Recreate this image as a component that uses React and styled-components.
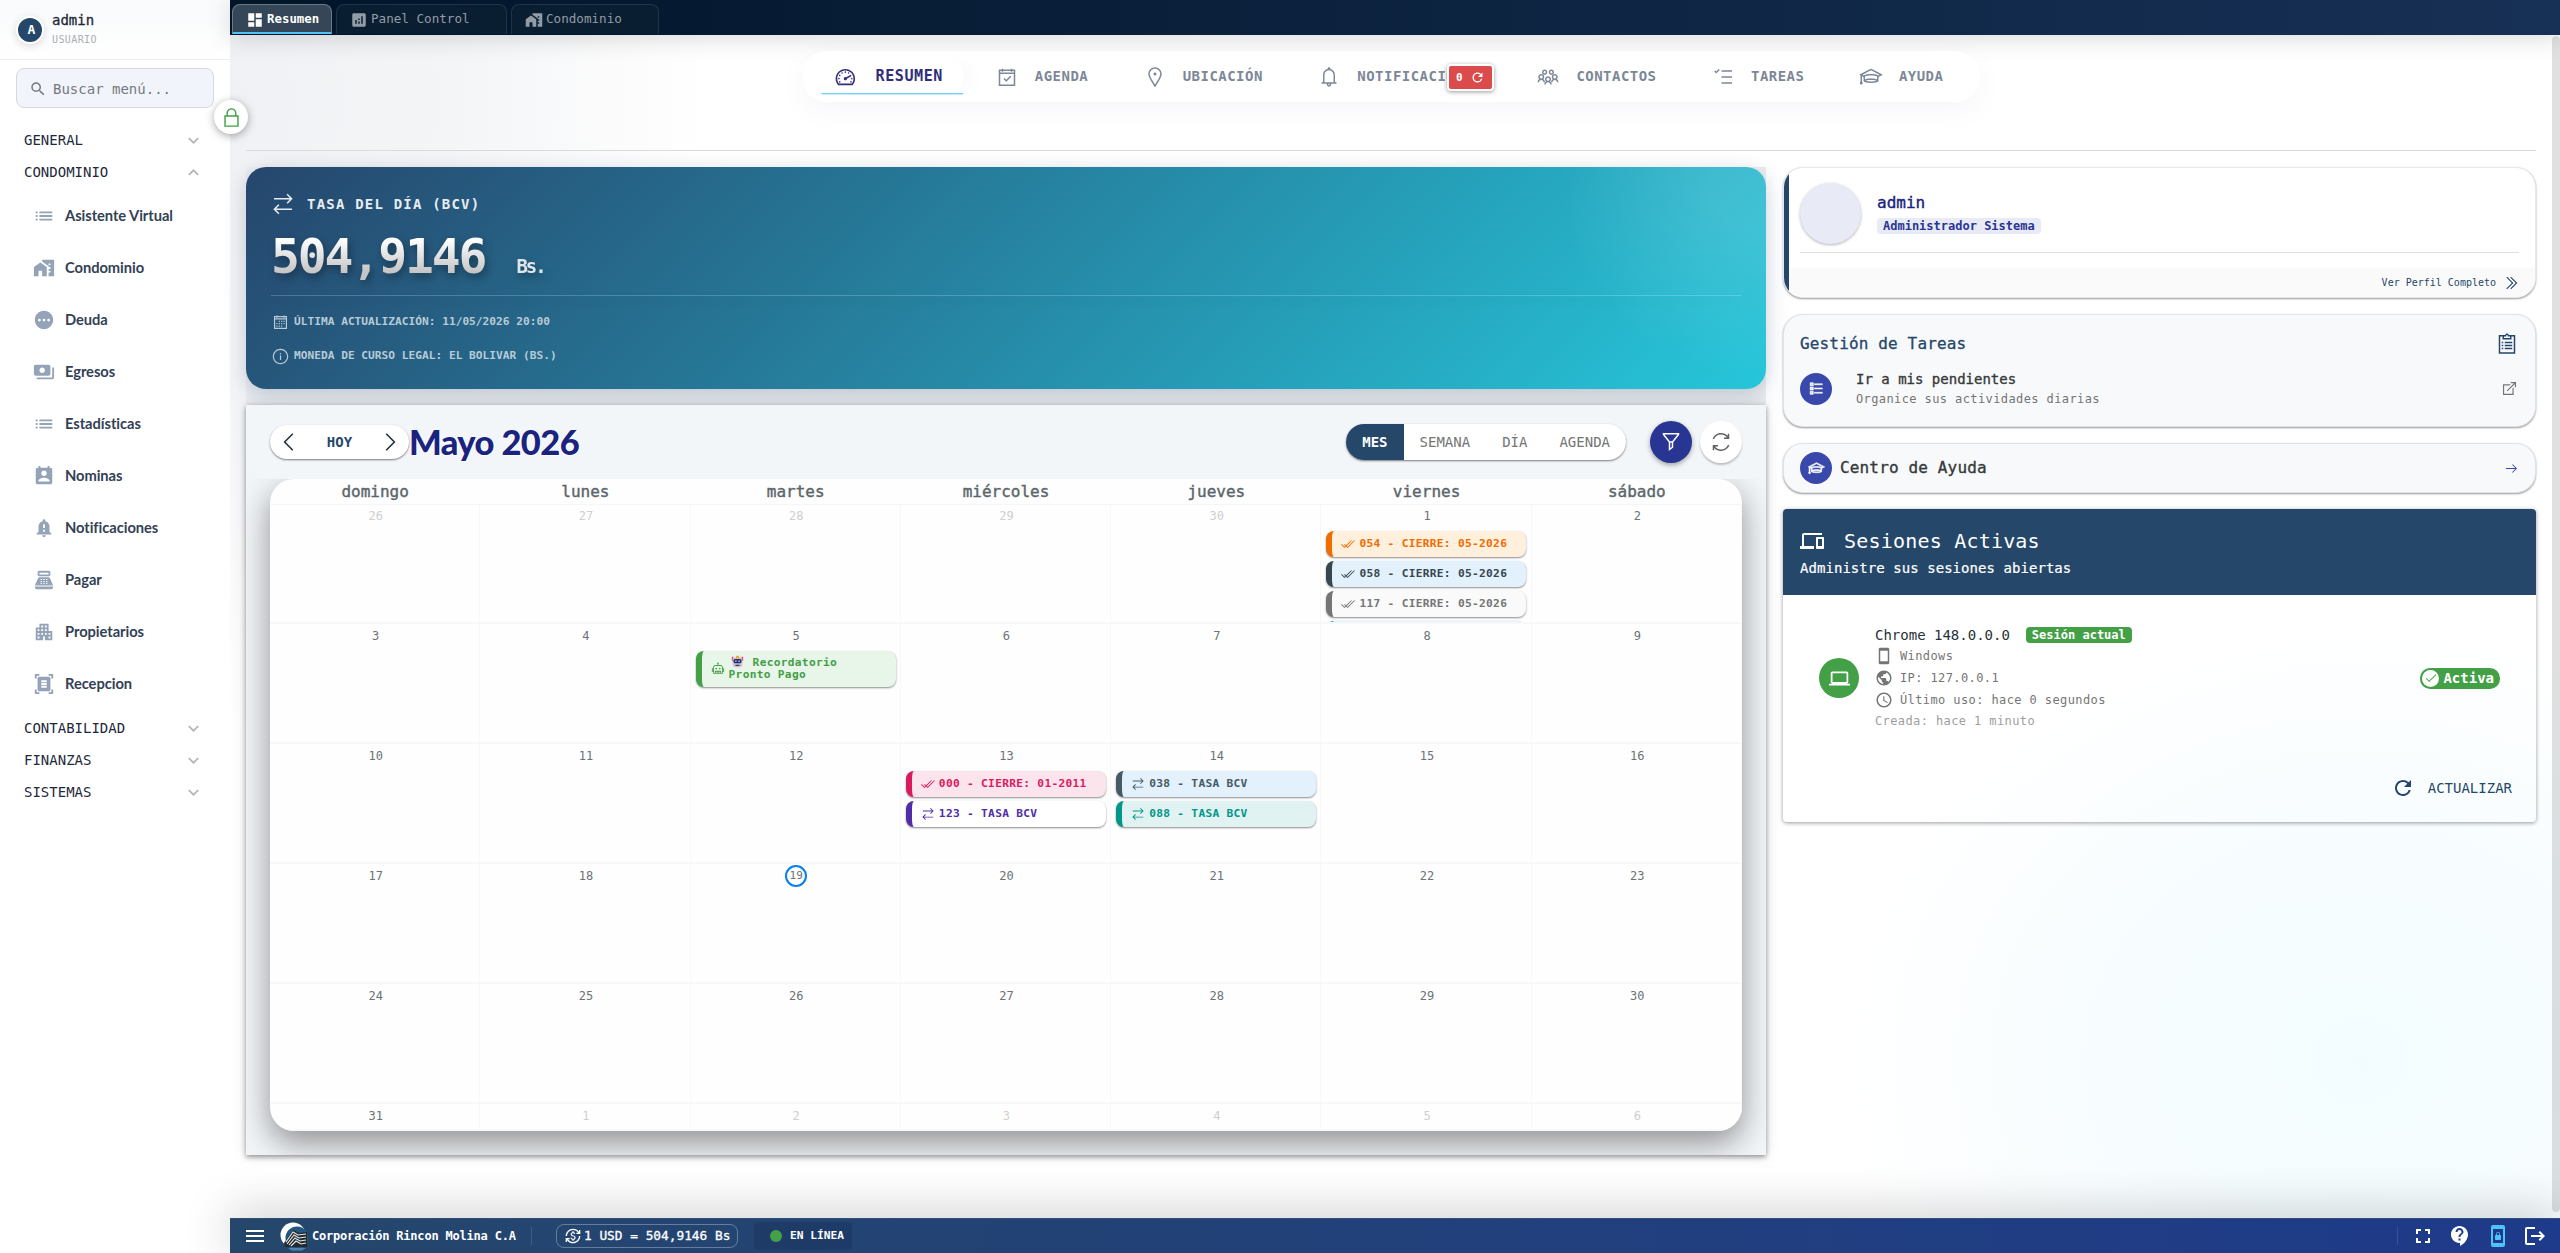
import React from "react";
import styled, { createGlobalStyle } from "styled-components";
import {
  MdAccessTime,
  MdAnalytics,
  MdApartment,
  MdComputer,
  MdContactSupport,
  MdCurrencyExchange,
  MdDashboard,
  MdDocumentScanner,
  MdFullscreen,
  MdHomeWork,
  MdKeyboardArrowDown,
  MdKeyboardArrowUp,
  MdList,
  MdLogout,
  MdMenu,
  MdNotificationImportant,
  MdOutlineDevices,
  MdPayments,
  MdPending,
  MdPermContactCalendar,
  MdPointOfSale,
  MdPublic,
  MdRefresh,
  MdScreenLockPortrait,
  MdSearch,
  MdStayCurrentPortrait,
} from "react-icons/md";
import {
  LiaAngleDoubleRightSolid,
  LiaAngleLeftSolid,
  LiaAngleRightSolid,
  LiaArrowRightSolid,
  LiaBell,
  LiaCalendarAlt,
  LiaCalendarCheck,
  LiaCheckDoubleSolid,
  LiaCheckSolid,
  LiaClipboardListSolid,
  LiaExchangeAltSolid,
  LiaExternalLinkAltSolid,
  LiaFilterSolid,
  LiaGraduationCapSolid,
  LiaInfoCircleSolid,
  LiaListSolid,
  LiaLockSolid,
  LiaMapMarkerSolid,
  LiaRobotSolid,
  LiaSyncSolid,
  LiaTachometerAltSolid,
  LiaTasksSolid,
  LiaUsersSolid,
} from "react-icons/lia";

const mono = `"DejaVu Sans Mono", "Liberation Mono", monospace`;
const display = `Lato, "Open Sans", sans-serif`;
const navy = "#25476a";

const GlobalStyle = createGlobalStyle`
  *, *::before, *::after { box-sizing: border-box; }
  body {
    margin: 0;
    background: #fff;
    color: #263238;
    font-family: ${mono};
    font-size: 14px;
    line-height: 1.2;
    overflow: hidden;
  }
  svg { display: block; flex: none; }
`;

const Layout = styled.div`
  display: grid;
  grid-template-columns: 230px 1fr;
  height: 1253px;
`;

// Sidebar
const Sidebar = styled.aside`
  display: flex;
  flex-direction: column;
  background: #fff;
`;

const UserBox = styled.div`
  display: flex;
  align-items: center;
  gap: 8px;
  height: 60px;
  padding: 0 16px;
  border-bottom: 1px solid #eceeef;
  background: linear-gradient(180deg, #f8fafb, #fff);
`;

const UserAvatar = styled.div`
  width: 28px;
  height: 28px;
  display: grid;
  place-items: center;
  border: 2px solid #fff;
  border-radius: 50%;
  background: ${navy};
  color: #fff;
  font-size: 13px;
  font-weight: bold;
  padding-left: 3px;
  box-shadow: 0 2px 8px rgba(0, 0, 0, 0.15);
`;

const UserName = styled.div`
  font-size: 14px;
  line-height: 20px;
  color: #1e293b;
  -webkit-text-stroke: 0.3px #1e293b;
`;

const UserRole = styled.div`
  font-size: 10px;
  line-height: 20px;
  letter-spacing: 0.4px;
  color: #a9adb2;
`;

const SearchBox = styled.div`
  display: flex;
  align-items: center;
  gap: 6px;
  height: 40px;
  margin: 8px 16px 16px;
  padding: 2px 12px 0;
  border: 1px solid #d3d9e3;
  border-radius: 8px;
  background: #f1f4fa;
  color: #757a80;
`;

const MenuGroup = styled.div`
  display: flex;
  align-items: center;
  justify-content: space-between;
  height: 32px;
  padding: 0 26px 0 24px;
  color: #1e293b;
  svg { color: #b3b3b3; }
`;

const MenuItems = styled.div`
  padding: 1.5px 0 2.5px;
`;

const MenuItem = styled.div`
  display: flex;
  align-items: center;
  gap: 10px;
  height: 52px;
  padding-left: 33px;
  font-family: ${display};
  font-size: 14.7px;
  font-weight: 700;
  letter-spacing: -0.05px;
  color: #334155;
  svg { color: #94a3b8; }
`;

const LockButton = styled.div`
  position: absolute;
  left: 214px;
  top: 100px;
  z-index: 5;
  width: 34px;
  height: 34px;
  display: grid;
  place-items: center;
  border-radius: 50%;
  background: #fff;
  color: #43a047;
  box-shadow: 0 2px 8px rgba(0, 0, 0, 0.35);
`;

// Main area
const Main = styled.main`
  display: flex;
  flex-direction: column;
  min-width: 0;
  background:
    radial-gradient(ellipse 520px 440px at 2130px 1060px, #f2fcfe 0%, #f8fdff 55%, rgba(255, 255, 255, 0) 100%),
    radial-gradient(ellipse 480px 640px at 0 100px, #f0f1f4 0%, #f4f5f7 45%, rgba(255, 255, 255, 0) 100%);
`;

const TopBar = styled.div`
  display: flex;
  align-items: flex-end;
  gap: 4px;
  height: 35px;
  padding: 0 2px 1px;
  background: linear-gradient(90deg, #011529, #173055);
  box-shadow: 0 4px 24px rgba(0, 0, 0, 0.14);
`;

const PageTab = styled.div`
  display: flex;
  align-items: flex-start;
  gap: 3px;
  width: ${(p) => p.$width}px;
  height: 30px;
  padding: 6px 0 0 13px;
  border: 1px solid ${(p) => (p.$active ? "#6b7987" : "#1f3346")};
  border-bottom: ${(p) => (p.$active ? "2px solid #4fc3f7" : "0")};
  border-radius: 8px 8px 0 0;
  background: ${(p) => (p.$active ? "#344658" : "#0a1e32")};
  color: ${(p) => (p.$active ? "#fff" : "#929ca6")};
  font-size: ${(p) => (p.$active ? 12.4 : 12.6)}px;
  font-weight: ${(p) => (p.$active ? "bold" : "normal")};
  line-height: 15px;
  white-space: nowrap;
`;

const Content = styled.div`
  flex: 1;
  display: flex;
  flex-direction: column;
  padding: 16px 24px 0 16px;
  min-height: 0;
`;

const NavArea = styled.div`
  display: flex;
  justify-content: center;
  height: 100px;
  border-bottom: 1px solid #d9dadb;
`;

const NavTabs = styled.nav`
  display: flex;
  gap: 14.5px;
  width: 1178px;
  height: 51px;
  padding: 9px 16px;
  border-radius: 25px;
  background: #fff;
  box-shadow: 0 8px 32px rgba(31, 38, 135, 0.04);
`;

const NavTab = styled.div`
  position: relative;
  display: flex;
  align-items: center;
  gap: 16px;
  height: 33px;
  padding: 0 20px;
  border-radius: 16px;
  color: ${(p) => (p.$active ? "#312f7c" : "#7c8797")};
  font-size: 14px;
  font-weight: bold;
  letter-spacing: 0.47px;
  ${(p) =>
    p.$active &&
    `
    transform: translateX(-1.5px) scale(1.08);
    background: #fff;
    box-shadow: 18px 0 18px -12px rgba(31, 38, 135, 0.07);
    &::after {
      content: "";
      position: absolute;
      left: 10px;
      right: 1px;
      bottom: 0;
      height: 1px;
      background: #4fc3f7;
    }
  `}
`;

const NavBadge = styled.span`
  position: absolute;
  right: 8px;
  top: 4px;
  display: flex;
  align-items: center;
  gap: 7px;
  height: 27px;
  width: 47px;
  padding: 0 7px;
  border: 2px solid #fff;
  border-radius: 4px;
  background: #db4b4b;
  color: #fff;
  font-size: 11px;
  letter-spacing: 0;
  box-shadow: 0 1px 4px rgba(0, 0, 0, 0.4);
`;

const Columns = styled.div`
  display: grid;
  grid-template-columns: 1520px 753px;
  gap: 17px;
  margin-top: 16px;
`;

// Rate card
const LeftColumn = styled.div`
  display: flex;
  flex-direction: column;
  gap: 16px;
  background: #eceef0;
`;

const RateCard = styled.section`
  height: 222px;
  padding: 24px 25px;
  border-radius: 20px;
  background:
    radial-gradient(circle 190px at 1505px 20px, rgba(255, 255, 255, 0.12) 20%, rgba(255, 255, 255, 0) 100%),
    linear-gradient(135deg, #26466d 0%, #26c6da 100%);
  box-shadow: 0 8px 24px rgba(38, 70, 130, 0.16), 0 2px 16px rgba(0, 0, 0, 0.08);
  color: #fff;
`;

const RateTitle = styled.h2`
  display: flex;
  align-items: center;
  gap: 12px;
  height: 26px;
  margin: 0;
  color: #e6eef3;
  font-size: 14px;
  letter-spacing: 1.2px;
`;

const RateValue = styled.div`
  display: flex;
  align-items: baseline;
  gap: 31px;
  height: 79px;
  padding-top: 11px;
  border-bottom: 1px solid rgba(255, 255, 255, 0.2);
  filter: drop-shadow(2px 4px 4px rgba(0, 0, 0, 0.35));
`;

const RateNumber = styled.span`
  background: linear-gradient(180deg, #fff 20%, #c4c4c4 80%);
  background-clip: text;
  -webkit-background-clip: text;
  color: transparent;
  font-size: 48px;
  font-weight: bold;
  line-height: 56px;
  letter-spacing: -2.1px;
`;

const RateUnit = styled.span`
  color: #dde6ea;
  font-size: 19px;
  font-weight: bold;
  letter-spacing: -2px;
`;

const RateNote = styled.div`
  display: flex;
  align-items: center;
  gap: 4px;
  height: 34px;
  color: #b7cbd6;
  font-size: 11.2px;
  font-weight: bold;
`;

const RateNotes = styled.div`
  padding-top: 9px;
`;

// Calendar
const CalendarCard = styled.section`
  position: relative;
  height: 750px;
  overflow: hidden;
  background: #f3f6f9;
`;

const CalendarShadow = styled.div`
  box-shadow: 0 2px 5px rgba(0, 0, 0, 0.4), 0 0 14px rgba(0, 0, 0, 0.12);
`;

const CalendarHeader = styled.header`
  position: relative;
  z-index: 1;
  display: flex;
  align-items: center;
  height: 74px;
  padding: 0 24px;
  background: #f3f6f9;
`;

const Pager = styled.div`
  display: flex;
  align-items: center;
  justify-content: space-between;
  width: 139px;
  height: 34px;
  padding: 0 8px;
  border-radius: 17px;
  background: #fff;
  color: ${navy};
  font-weight: bold;
  box-shadow: 0 1px 2px rgba(0, 0, 0, 0.5);
  svg { color: #1f2d3d; }
`;

const MonthTitle = styled.h1`
  margin: 0 auto 0 0;
  font-family: ${display};
  font-size: 34.5px;
  font-weight: 900;
  line-height: 40px;
  letter-spacing: -0.6px;
  color: #1a237e;
  text-shadow: 1px 1px 0 #fff;
`;

const ViewSwitch = styled.div`
  display: flex;
  height: 36px;
  margin-right: 24px;
  border-radius: 18px;
  overflow: hidden;
  background: #fff;
  box-shadow: 0 1px 2px rgba(0, 0, 0, 0.5);
`;

const ViewOption = styled.div`
  display: flex;
  align-items: center;
  padding: 0 16px;
  background: ${(p) => (p.$active ? navy : "transparent")};
  color: ${(p) => (p.$active ? "#fff" : "#757575")};
  font-weight: ${(p) => (p.$active ? "bold" : "normal")};
`;

const RoundButton = styled.div`
  display: grid;
  place-items: center;
  width: 42px;
  height: 42px;
  margin-left: ${(p) => (p.$filled ? 0 : 8)}px;
  border-radius: 50%;
  background: ${(p) => (p.$filled ? "#283593" : "#fff")};
  color: ${(p) => (p.$filled ? "#fff" : "#616161")};
  box-shadow: 0 2px ${(p) => (p.$filled ? 5 : 2)}px rgba(0, 0, 0, ${(p) => (p.$filled ? 0.35 : 0.22)});
`;

const Calendar = styled.div`
  height: 652px;
  margin: 0 24px;
  border-radius: 24px;
  overflow: hidden;
  background: #fefefe;
  box-shadow: 0 12px 32px rgba(0, 0, 0, 0.42);
`;

const WeekRow = styled.div`
  display: grid;
  grid-template-columns: repeat(7, 1fr);
  height: ${(p) => p.$height}px;
`;

const WeekDay = styled.div`
  display: grid;
  place-items: center;
  border-bottom: 1px solid #f5f6f7;
  font-size: 16px;
  line-height: 25px;
  color: #5b666b;
  -webkit-text-stroke: 0.4px #5b666b;
`;

const DayCell = styled.div`
  display: flex;
  flex-direction: column;
  gap: 4px;
  padding: 0 3px 0 5px;
  overflow: hidden;
  min-width: 0;
  border-right: 1px solid #f5f7f9;
  border-bottom: 2px solid #f7f8fa;
`;

const DayNumber = styled.div`
  display: grid;
  place-items: center;
  width: 22px;
  height: 22px;
  flex: none;
  margin: 1px auto 0;
  border: ${(p) => (p.$today ? "2px solid #0a7fe6" : "0")};
  border-radius: 50%;
  color: ${(p) => (p.$muted ? "#cfcfcf" : "#6b7276")};
  font-size: ${(p) => (p.$today ? 11 : 12)}px;
`;

const Event = styled.div`
  display: flex;
  align-items: center;
  gap: 4px;
  flex: none;
  width: 200px;
  min-height: 26px;
  padding: 6px 30px 6px 8px;
  border-left: 6px solid ${(p) => p.$color};
  border-radius: 8px;
  background: ${(p) => p.$bg};
  color: ${(p) => p.$color};
  font-size: 11.2px;
  font-weight: bold;
  line-height: 12px;
  letter-spacing: 0.3px;
  box-shadow: 0 1px 2px rgba(0, 0, 0, 0.45);
  svg { margin: 0 0 0 1px; }
`;

const EventText = styled.span`
  white-space: pre-line;
  margin-right: -30px;
  svg { display: inline-block; vertical-align: -2px; margin: -2px 2px 0 2px; }
`;

// Right column
const RightColumn = styled.div`
  display: flex;
  flex-direction: column;
  gap: 16px;
`;

const Card = styled.section`
  height: ${(p) => p.$height}px;
  padding: 0 16px;
  border: 1px solid #e0e4e9;
  border-radius: 20px;
  background: #f8f9fb;
  box-shadow: 0 1px 2px rgba(0, 0, 0, 0.4);
`;

const ProfileCard = styled.section`
  position: relative;
  height: 131px;
  display: flex;
  flex-direction: column;
  justify-content: space-between;
  border: 1px solid #e6e8ea;
  border-radius: 20px;
  overflow: hidden;
  background: #fff;
  box-shadow: 0 1px 2px rgba(0, 0, 0, 0.4);
  &::before {
    content: "";
    position: absolute;
    inset: 0 auto 0 0;
    width: 5px;
    background: ${navy};
  }
`;

const ProfileTop = styled.div`
  display: flex;
  align-items: center;
  gap: 16px;
  height: 85px;
  margin: 0 16px;
  padding-top: 7px;
  border-bottom: 1px solid #dcdddf;
`;

const ProfilePhoto = styled.div`
  width: 61px;
  height: 61px;
  border-radius: 50%;
  background: #e8eaf6;
  box-shadow: 0 1px 3px rgba(0, 0, 0, 0.3);
`;

const ProfileName = styled.div`
  margin-bottom: 4px;
  color: #1a237e;
  font-size: 16px;
  line-height: 20px;
  -webkit-text-stroke: 0.4px #1a237e;
`;

const Chip = styled.span`
  display: inline-block;
  height: 16px;
  padding: 0 6px;
  border-radius: 4px;
  background: ${(p) => (p.$green ? "#43a047" : "#e8eaf6")};
  color: ${(p) => (p.$green ? "#fff" : "#283593")};
  font-size: 12px;
  font-weight: bold;
  line-height: 16px;
`;

const ProfileLink = styled.div`
  display: flex;
  align-items: center;
  justify-content: flex-end;
  gap: 6px;
  height: 29px;
  padding-right: 15px;
  background: #fafafa;
  color: ${navy};
  font-size: 10px;
`;

const CardTitle = styled.h3`
  display: flex;
  align-items: center;
  justify-content: space-between;
  height: 24px;
  margin: 17px 0 0;
  color: ${navy};
  font-size: 16px;
  font-weight: normal;
  letter-spacing: 0.15px;
  -webkit-text-stroke: 0.3px ${navy};
`;

const CardRow = styled.div`
  display: flex;
  align-items: center;
  height: ${(p) => p.$height}px;
  gap: ${(p) => p.$gap}px;
`;

const Circle = styled.div`
  display: grid;
  place-items: center;
  flex: none;
  width: ${(p) => p.$size}px;
  height: ${(p) => p.$size}px;
  border-radius: 50%;
  background: ${(p) => p.$bg};
  color: #fff;
`;

const Grow = styled.div`
  flex: 1;
`;

const RowTitle = styled.div`
  font-size: ${(p) => p.$size}px;
  line-height: 20px;
  color: #37393b;
  letter-spacing: ${(p) => (p.$size === 16 ? 0.15 : 0)}px;
  -webkit-text-stroke: 0.35px #37393b;
`;

const Caption = styled.div`
  display: flex;
  align-items: center;
  gap: 7px;
  font-size: 12px;
  line-height: 20px;
  letter-spacing: 0.4px;
  color: ${(p) => (p.$light ? "#9e9e9e" : "#757575")};
`;

const SessionsCard = styled.section`
  height: 313px;
  border-radius: 4px;
  box-shadow: 0 1px 4px rgba(0, 0, 0, 0.4);
`;

const SessionsHeader = styled.header`
  height: 86px;
  padding: 16px 17px;
  border-radius: 4px 4px 0 0;
  background: ${navy};
  color: #fff;
`;

const SessionsTitle = styled.h3`
  display: flex;
  align-items: center;
  gap: 20px;
  height: 32px;
  margin: 0;
  font-size: 20px;
  font-weight: normal;
  letter-spacing: 0.2px;
`;

const SessionsSub = styled.div`
  line-height: 22px;
  letter-spacing: 0.05px;
  -webkit-text-stroke: 0.2px #fff;
`;

const SessionRow = styled.div`
  display: flex;
  align-items: center;
  gap: 16px;
  height: 110px;
  margin-top: 28px;
  padding: 0 36px 0 36px;
`;

const SessionName = styled.div`
  display: flex;
  align-items: center;
  gap: 16px;
  height: 20px;
  color: #263238;
`;

const DeviceLine = styled(Caption)`
  height: 22px;
`;

const ActiveBadge = styled.div`
  display: flex;
  align-items: center;
  gap: 4px;
  height: 21px;
  padding: 0 6px 0 2px;
  border-radius: 10px;
  background: #43a047;
  color: #fff;
  font-weight: bold;
`;

const CheckDot = styled.span`
  display: grid;
  place-items: center;
  width: 17px;
  height: 17px;
  border-radius: 50%;
  background: #fff;
  color: #43a047;
`;

const RefreshAction = styled.div`
  display: flex;
  align-items: center;
  justify-content: flex-end;
  gap: 13px;
  margin-top: 43px;
  padding-right: 24px;
  color: ${navy};
`;

const ScrollThumb = styled.div`
  position: absolute;
  right: 0;
  top: 36px;
  width: 8px;
  height: 1176px;
  border-radius: 4px;
  background: rgba(0, 0, 0, 0.12);
`;

// Footer
const Footer = styled.footer`
  position: relative;
  z-index: 4;
  display: flex;
  align-items: center;
  height: 35px;
  padding: 0 13px;
  background: linear-gradient(90deg, #25476b, #1e3a8a);
  border-top: 1px solid #2d5078;
  color: #fff;
  box-shadow: 0 -4px 48px rgba(0, 0, 0, 0.22);
`;

const Company = styled.div`
  width: 204px;
  margin-left: 3px;
  white-space: nowrap;
  font-size: 12px;
  font-weight: bold;
  letter-spacing: -0.2px;
`;

const Bar = styled.i`
  width: 1px;
  height: 18px;
  margin-left: ${(p) => p.$left}px;
  background: rgba(255, 255, 255, 0.12);
`;

const RateChip = styled.div`
  display: flex;
  align-items: center;
  gap: 3px;
  width: 182px;
  height: 24px;
  margin-left: 24px;
  padding-left: 8px;
  border: 1px solid rgba(255, 255, 255, 0.3);
  border-radius: 8px;
  font-size: 12.8px;
  -webkit-text-stroke: 0.3px #fff;
`;

const Online = styled.div`
  display: flex;
  align-items: center;
  gap: 8px;
  width: 98px;
  height: 28px;
  margin: 0 auto 0 16px;
  padding-left: 16px;
  border-radius: 4px;
  background: rgba(20, 40, 80, 0.3);
  font-size: 11.2px;
  font-weight: bold;
`;

const OnlineDot = styled.i`
  width: 12px;
  height: 12px;
  border-radius: 50%;
  background: #43a047;
`;

const FooterIcons = styled.div`
  display: flex;
  align-items: center;
  gap: 13.5px;
  margin-left: 13px;
`;

const menuItems = [
  ["Asistente Virtual", MdList],
  ["Condominio", MdHomeWork],
  ["Deuda", MdPending],
  ["Egresos", MdPayments],
  ["Estadísticas", MdList],
  ["Nominas", MdPermContactCalendar],
  ["Notificaciones", MdNotificationImportant],
  ["Pagar", MdPointOfSale],
  ["Propietarios", MdApartment],
  ["Recepcion", MdDocumentScanner],
];

const navTabs = [
  ["RESUMEN", LiaTachometerAltSolid],
  ["AGENDA", LiaCalendarCheck],
  ["UBICACIÓN", LiaMapMarkerSolid],
  ["NOTIFICACIONES", LiaBell],
  ["CONTACTOS", LiaUsersSolid],
  ["TAREAS", LiaTasksSolid],
  ["AYUDA", LiaGraduationCapSolid],
];

const weekDays = ["domingo", "lunes", "martes", "miércoles", "jueves", "viernes", "sábado"];

const weeks = [
  [26, 27, 28, 29, 30, 1, 2],
  [3, 4, 5, 6, 7, 8, 9],
  [10, 11, 12, 13, 14, 15, 16],
  [17, 18, 19, 20, 21, 22, 23],
  [24, 25, 26, 27, 28, 29, 30],
  [31, 1, 2, 3, 4, 5, 6],
];

const RobotFace = () => (
  <svg width="13" height="13" viewBox="0 0 16 16">
    <path d="M1 2h2v5H1zM13 2h2v5h-2z" fill="#e0457b" />
    <rect x="2" y="3" width="12" height="12" rx="4" fill="#cdbfd8" />
    <path d="M6 1h4v3H6z" fill="#f6a723" />
    <rect x="3" y="5" width="10" height="5" rx="2" fill="#2b2d5b" />
    <path d="M5 6.500h2v2H5zM9 6.500h2v2H9z" fill="#6fb6ee" />
    <rect x="5.500" y="12" width="5" height="1.500" fill="#3c3a5e" />
  </svg>
);

// Keyed by week index and day
const events = {
  "0-1": [
    { text: "054 - CIERRE: 05-2026", icon: LiaCheckDoubleSolid, color: "#ef6c00", bg: "#fff0dd" },
    { text: "058 - CIERRE: 05-2026", icon: LiaCheckDoubleSolid, color: "#37474f", bg: "#e3f1fc" },
    { text: "117 - CIERRE: 05-2026", icon: LiaCheckDoubleSolid, color: "#757575", bg: "#fafafa" },
    { text: "", icon: LiaCheckDoubleSolid, color: "#1e88e5", bg: "#e3f1fc" },
  ],
  "1-5": [
    {
      text: (
        <>
          <RobotFace /> Recordatorio{"\n"}Pronto Pago
        </>
      ),
      icon: LiaRobotSolid,
      color: "#43a047",
      bg: "#e8f5e9",
    },
  ],
  "2-13": [
    { text: "000 - CIERRE: 01-2011", icon: LiaCheckDoubleSolid, color: "#d81b60", bg: "#fce4ec" },
    { text: "123 - TASA BCV", icon: LiaExchangeAltSolid, color: "#512da8", bg: "#fff" },
  ],
  "2-14": [
    { text: "038 - TASA BCV", icon: LiaExchangeAltSolid, color: "#455a64", bg: "#e3f1fc" },
    { text: "088 - TASA BCV", icon: LiaExchangeAltSolid, color: "#009688", bg: "#e0f2f1" },
  ],
};

const LogoSvg = styled.svg`
  margin-left: 13px;
`;

const CompanyLogo = () => (
  <LogoSvg width="29" height="29" viewBox="0 0 29 29">
    <circle cx="13" cy="13" r="12.500" fill="#fff" />
    <circle cx="17" cy="16" r="11.500" fill="#23577f" />
    <path d="M4 21 13 8l6 3 8-1v15H5z" fill="#222a30" />
    <g fill="none" stroke="#e6e9ea" strokeWidth="1.100">
      <path d="M6 20 13 10l5 3 8-1" />
      <path d="m7 22 7-9 5 3 7-1" />
      <path d="m9 23 6-7 5 3 6-1" />
      <path d="m11 24 5-5 5 3 5-1" />
    </g>
    <path d="M8 26h18l-4 2.500H12z" fill="#4c86b0" />
  </LogoSvg>
);

const Day = ({ day, week }) => {
  const muted = (week === 0 && day > 20) || (week === 5 && day < 20);
  const items = muted ? [] : events[`${week}-${day}`] || [];
  return (
    <DayCell>
      <DayNumber $muted={muted} $today={week === 3 && day === 19}>
        {day}
      </DayNumber>
      {items.map((item, i) => (
        <Event key={i} $color={item.color} $bg={item.bg}>
          <item.icon size={14} />
          <EventText>{item.text}</EventText>
        </Event>
      ))}
    </DayCell>
  );
};

const App = () => (
  <>
    <GlobalStyle />
    <Layout>
      <Sidebar>
        <UserBox>
          <UserAvatar>A</UserAvatar>
          <div>
            <UserName>admin</UserName>
            <UserRole>USUARIO</UserRole>
          </div>
        </UserBox>
        <SearchBox>
          <MdSearch size={18} />
          Buscar menú...
        </SearchBox>
        <MenuGroup>
          GENERAL
          <MdKeyboardArrowDown size={21} />
        </MenuGroup>
        <MenuGroup>
          CONDOMINIO
          <MdKeyboardArrowUp size={21} />
        </MenuGroup>
        <MenuItems>
          {menuItems.map(([label, Icon]) => (
            <MenuItem key={label}>
              <Icon size={22} />
              {label}
            </MenuItem>
          ))}
        </MenuItems>
        {["CONTABILIDAD", "FINANZAS", "SISTEMAS"].map((label) => (
          <MenuGroup key={label}>
            {label}
            <MdKeyboardArrowDown size={21} />
          </MenuGroup>
        ))}
      </Sidebar>
      <LockButton>
        <LiaLockSolid size={23} />
      </LockButton>
      <Main>
        <TopBar>
          <PageTab $width={100} $active>
            <MdDashboard size={18} />
            Resumen
          </PageTab>
          <PageTab $width={171}>
            <MdAnalytics size={18} />
            Panel Control
          </PageTab>
          <PageTab $width={148}>
            <MdHomeWork size={18} />
            Condominio
          </PageTab>
        </TopBar>
        <Content>
          <NavArea>
            <NavTabs>
              {navTabs.map(([label, Icon], i) => (
                <NavTab key={label} $active={i === 0}>
                  <Icon size={24} />
                  {label}
                  {label === "NOTIFICACIONES" && (
                    <NavBadge>
                      0 <MdRefresh size={15} />
                    </NavBadge>
                  )}
                </NavTab>
              ))}
            </NavTabs>
          </NavArea>
          <Columns>
            <LeftColumn>
              <RateCard>
                <RateTitle>
                  <LiaExchangeAltSolid size={24} />
                  TASA DEL DÍA (BCV)
                </RateTitle>
                <RateValue>
                  <RateNumber>504,9146</RateNumber>
                  <RateUnit>Bs.</RateUnit>
                </RateValue>
                <RateNotes>
                  <RateNote>
                    <LiaCalendarAlt size={19} />
                    ÚLTIMA ACTUALIZACIÓN: 11/05/2026 20:00
                  </RateNote>
                  <RateNote>
                    <LiaInfoCircleSolid size={19} />
                    MONEDA DE CURSO LEGAL: EL BOLIVAR (BS.)
                  </RateNote>
                </RateNotes>
              </RateCard>
              <CalendarShadow>
                <CalendarCard>
                  <CalendarHeader>
                    <Pager>
                      <LiaAngleLeftSolid size={24} />
                      HOY
                      <LiaAngleRightSolid size={24} />
                    </Pager>
                    <MonthTitle>Mayo 2026</MonthTitle>
                    <ViewSwitch>
                      {["MES", "SEMANA", "DÍA", "AGENDA"].map((view, i) => (
                        <ViewOption key={view} $active={i === 0}>
                          {view}
                        </ViewOption>
                      ))}
                    </ViewSwitch>
                    <RoundButton $filled>
                      <LiaFilterSolid size={24} />
                    </RoundButton>
                    <RoundButton>
                      <LiaSyncSolid size={24} />
                    </RoundButton>
                  </CalendarHeader>
                  <Calendar>
                    <WeekRow $height={25}>
                      {weekDays.map((name) => (
                        <WeekDay key={name}>{name}</WeekDay>
                      ))}
                    </WeekRow>
                    {weeks.map((week, w) => (
                      <WeekRow key={w} $height={w === 5 ? 27 : 120}>
                        {week.map((day) => (
                          <Day key={day} day={day} week={w} />
                        ))}
                      </WeekRow>
                    ))}
                  </Calendar>
                </CalendarCard>
              </CalendarShadow>
            </LeftColumn>
            <RightColumn>
              <ProfileCard>
                <ProfileTop>
                  <ProfilePhoto />
                  <div>
                    <ProfileName>admin</ProfileName>
                    <Chip>Administrador Sistema</Chip>
                  </div>
                </ProfileTop>
                <ProfileLink>
                  Ver Perfil Completo
                  <LiaAngleDoubleRightSolid size={18} />
                </ProfileLink>
              </ProfileCard>
              <Card $height={113}>
                <CardTitle>
                  Gestión de Tareas
                  <LiaClipboardListSolid size={24} />
                </CardTitle>
                <CardRow $height={65} $gap={24}>
                  <Circle $size={32} $bg="#3949ab">
                    <LiaListSolid size={17} strokeWidth={1} />
                  </Circle>
                  <Grow>
                    <RowTitle $size={14}>Ir a mis pendientes</RowTitle>
                    <Caption>Organice sus actividades diarias</Caption>
                  </Grow>
                  <LiaExternalLinkAltSolid size={19} color="#757575" />
                </CardRow>
              </Card>
              <Card $height={50}>
                <CardRow $height={48} $gap={8}>
                  <Circle $size={32} $bg="#3949ab">
                    <LiaGraduationCapSolid size={17} strokeWidth={1} />
                  </Circle>
                  <Grow>
                    <RowTitle $size={16}>Centro de Ayuda</RowTitle>
                  </Grow>
                  <LiaArrowRightSolid size={15} color="#3949ab" />
                </CardRow>
              </Card>
              <SessionsCard>
                <SessionsHeader>
                  <SessionsTitle>
                    <MdOutlineDevices size={24} />
                    Sesiones Activas
                  </SessionsTitle>
                  <SessionsSub>Administre sus sesiones abiertas</SessionsSub>
                </SessionsHeader>
                <SessionRow>
                  <Circle $size={40} $bg="#43a047">
                    <MdComputer size={21} />
                  </Circle>
                  <Grow>
                    <SessionName>
                      Chrome 148.0.0.0
                      <Chip $green>Sesión actual</Chip>
                    </SessionName>
                    <DeviceLine>
                      <MdStayCurrentPortrait size={18} />
                      Windows
                    </DeviceLine>
                    <DeviceLine>
                      <MdPublic size={18} />
                      IP: 127.0.0.1
                    </DeviceLine>
                    <DeviceLine>
                      <MdAccessTime size={18} />
                      Último uso: hace 0 segundos
                    </DeviceLine>
                    <Caption $light>Creada: hace 1 minuto</Caption>
                  </Grow>
                  <ActiveBadge>
                    <CheckDot>
                      <LiaCheckSolid size={12} />
                    </CheckDot>
                    Activa
                  </ActiveBadge>
                </SessionRow>
                <RefreshAction>
                  <MdRefresh size={24} />
                  ACTUALIZAR
                </RefreshAction>
              </SessionsCard>
            </RightColumn>
          </Columns>
        </Content>
        <ScrollThumb />
        <Footer>
          <MdMenu size={24} />
          <CompanyLogo />
          <Company>Corporación Rincon Molina C.A</Company>
          <Bar $left={15} />
          <RateChip>
            <MdCurrencyExchange size={16} />1 USD = 504,9146 Bs
          </RateChip>
          <Online>
            <OnlineDot />
            EN LÍNEA
          </Online>
          <Bar $left={0} />
          <FooterIcons>
            <MdFullscreen size={24} />
            <MdContactSupport size={24} />
            <MdScreenLockPortrait size={24} color="#4fc3f7" />
            <MdLogout size={24} />
          </FooterIcons>
        </Footer>
      </Main>
    </Layout>
  </>
);

export default App;
